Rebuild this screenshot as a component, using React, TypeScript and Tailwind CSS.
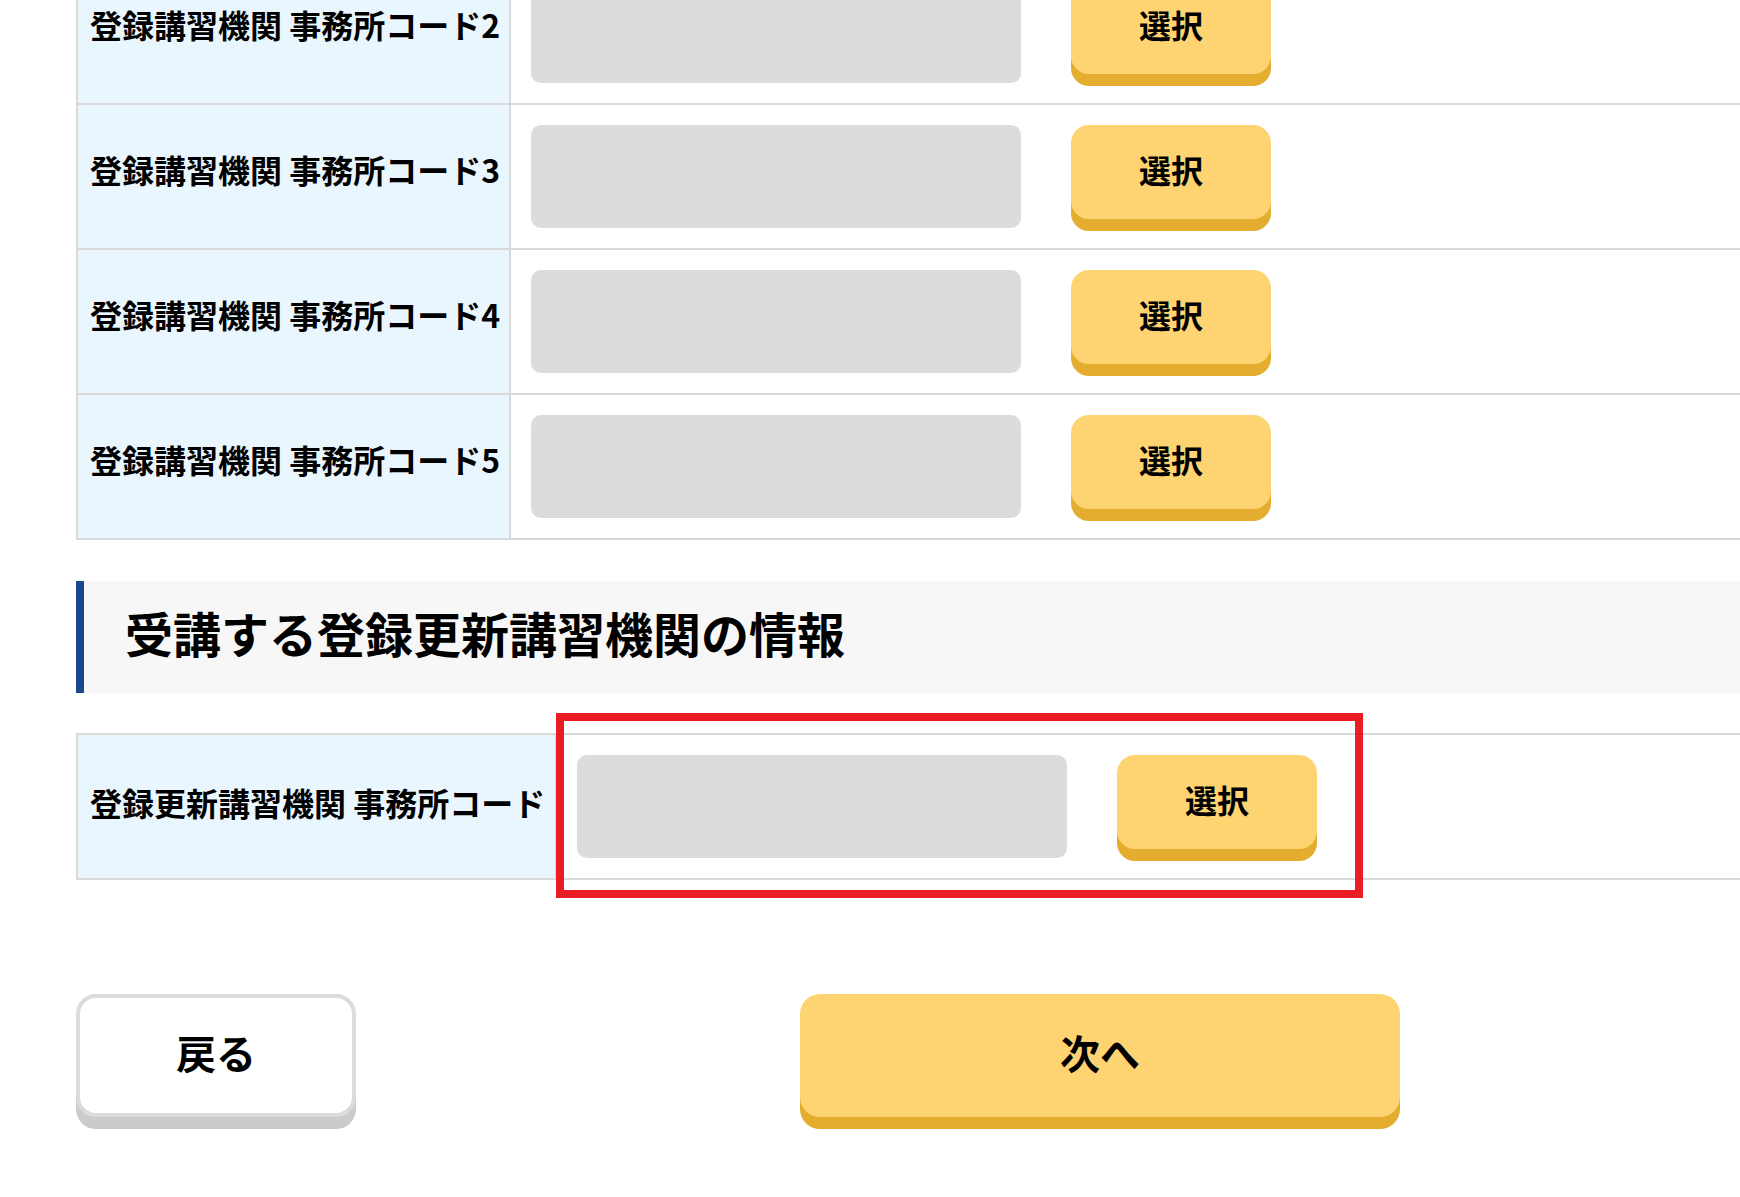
import React from "react";

const FONT = { fontFamily: '"Noto Sans CJK JP", "Noto Sans", sans-serif' };

function SelectButton() {
  return (
    <button
      type="button"
      className="ml-[50px] h-[94px] w-[200px] shrink-0 rounded-[18px] bg-[#fed473] pb-[6px] text-[32px] font-bold leading-none text-black shadow-[0_12px_0_#e5ad2f]"
    >
      選択
    </button>
  );
}

function Row({ label, labelClass }: { label: string; labelClass: string }) {
  return (
    <div className="flex border-b-2 border-[#d9d9d9]">
      <div
        className={`${labelClass} flex shrink-0 items-center whitespace-nowrap border-r-2 border-[#d9d9d9] bg-[#e9f6fe] pl-3 text-[32px] font-bold text-black`}
      >
        {label}
      </div>
      <div className="flex items-start p-5">
        <div className="h-[103px] w-[490px] shrink-0 rounded-[10px] bg-[#dcdcdc]" />
        <SelectButton />
      </div>
    </div>
  );
}

export default function App() {
  return (
    <div className="h-[1197px] w-full overflow-hidden bg-white" style={FONT}>
      <div className="-mt-[42px] ml-[76px] w-[1740px]">
        <div className="border-l-2 border-t-2 border-[#d9d9d9]">
          {[2, 3, 4, 5].map((n) => (
            <Row key={n} label={`登録講習機関 事務所コード${n}`} labelClass="w-[433px] pb-[16px]" />
          ))}
        </div>

        <div className="mt-[41px] flex h-[112px] items-center border-l-8 border-[#174a8b] bg-[#f7f7f7] pb-[10px] pl-[41px]">
          <h2 className="text-[48px] font-bold leading-none text-black">受講する登録更新講習機関の情報</h2>
        </div>

        <div className="relative mt-[40px] border-l-2 border-t-2 border-[#d9d9d9]">
          <Row label="登録更新講習機関 事務所コード" labelClass="w-[479px] pb-[9px]" />
          <div className="pointer-events-none absolute left-[478px] top-[-22px] h-[185px] w-[807px] border-8 border-[#ec1c24]" />
        </div>

        <div className="mt-[114px] flex items-start">
          <button
            type="button"
            className="h-[123px] w-[280px] shrink-0 rounded-[20px] border-[4px] border-[#dcdcdc] bg-white pb-[8px] text-[40px] font-bold leading-none text-black shadow-[0_12px_0_#cbcbcb]"
          >
            戻る
          </button>
          <button
            type="button"
            className="ml-[444px] h-[123px] w-[600px] shrink-0 rounded-[20px] bg-[#fed473] pb-[8px] text-[40px] font-bold leading-none text-black shadow-[0_12px_0_#e5ad2f]"
          >
            次へ
          </button>
        </div>
      </div>
    </div>
  );
}
